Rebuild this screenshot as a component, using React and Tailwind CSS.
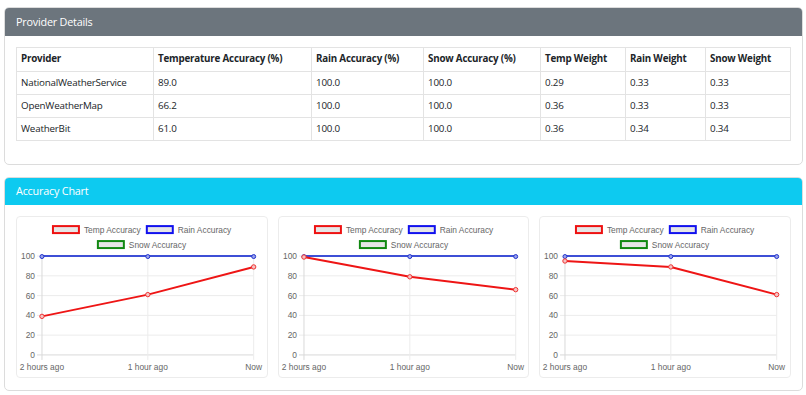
import React from 'react';

const providers = [
  { name: 'NationalWeatherService', temp: '89.0', rain: '100.0', snow: '100.0', tw: '0.29', rw: '0.33', sw: '0.33' },
  { name: 'OpenWeatherMap', temp: '66.2', rain: '100.0', snow: '100.0', tw: '0.36', rw: '0.33', sw: '0.33' },
  { name: 'WeatherBit', temp: '61.0', rain: '100.0', snow: '100.0', tw: '0.36', rw: '0.34', sw: '0.34' },
];

const charts = [
  { temp: [39, 61, 89] },
  { temp: [99, 79, 66] },
  { temp: [95, 89, 61] },
];

const xs = [26, 132, 238];
const yOf = (v) => 139 - v * 0.99;

const AccuracyChart = ({ temp }) => {
  const tempPts = temp.map((v, i) => `${xs[i]},${yOf(v)}`).join(' ');
  const rainPts = xs.map((x) => `${x},${yOf(100)}`).join(' ');

  return (
    <svg viewBox="1 1 250 160" className="block w-full h-[160px]" style={{ fontFamily: '"Liberation Sans", Arial, sans-serif' }}>
      {/* legend */}
      <rect x="37" y="10" width="26" height="7" fill="#e6e6e6" stroke="#ee1111" strokeWidth="2" />
      <text x="68" y="16.5" fontSize="8.4" fill="#666">Temp Accuracy</text>
      <rect x="131" y="10" width="26" height="7" fill="#e6e6e6" stroke="#1111ee" strokeWidth="2" />
      <text x="162" y="16.5" fontSize="8.4" fill="#666">Rain Accuracy</text>
      <rect x="82" y="25" width="26" height="7" fill="#e6e6e6" stroke="#118811" strokeWidth="2" />
      <text x="113" y="31.5" fontSize="8.4" fill="#666">Snow Accuracy</text>

      {/* grid */}
      {[0, 20, 40, 60, 80, 100].map((v) => (
        <g key={v}>
          <line x1="21" x2="238" y1={yOf(v)} y2={yOf(v)} stroke={v === 0 ? '#d9d9d9' : '#ececec'} strokeWidth="1" />
          <text x="19" y={yOf(v) + 3} fontSize="8.4" fill="#666" textAnchor="end">{v}</text>
        </g>
      ))}
      {xs.map((x, i) => (
        <line key={x} x1={x} x2={x} y1={yOf(100)} y2="144" stroke={i === 0 ? '#d9d9d9' : '#ececec'} strokeWidth="1" />
      ))}
      {['2 hours ago', '1 hour ago', 'Now'].map((l, i) => (
        <text key={l} x={xs[i]} y="154" fontSize="8.4" fill="#666" textAnchor="middle">{l}</text>
      ))}

      {/* data */}
      <polyline points={rainPts} fill="none" stroke="#3d4fd6" strokeWidth="2" />
      {xs.map((x) => (
        <circle key={x} cx={x} cy={yOf(100) + 0.5} r="2" fill="#9aa3ea" stroke="#2233cc" strokeWidth="1" />
      ))}
      <polyline points={tempPts} fill="none" stroke="#ee1515" strokeWidth="2" strokeLinejoin="round" />
      {temp.map((v, i) => (
        <circle key={i} cx={xs[i]} cy={yOf(v)} r="2.2" fill="#f4c4c4" stroke="#ee3333" strokeWidth="1" />
      ))}
    </svg>
  );
};

const App = () => {
  return (
    <div className="min-h-[395px] bg-white pl-[4px] pr-[3px] pt-[7px] text-[#212529]" style={{ fontFamily: '"Open Sans", "Noto Sans", sans-serif' }}>
      {/* Provider details */}
      <div className="border border-[#dcdcdc] rounded-[5px] overflow-hidden">
        <div className="h-[28px] bg-[#6c757d] text-white text-[10.8px] tracking-[-0.2px] flex items-center pl-[11px]">
          Provider Details
        </div>
        <div className="px-[11px] pt-[11px] pb-[23px]">
          <table className="w-full table-fixed border-collapse text-[9.8px] tracking-[-0.2px]">
            <colgroup>
              <col className="w-[137px]" />
              <col className="w-[158px]" />
              <col className="w-[112px]" />
              <col className="w-[117px]" />
              <col className="w-[85px]" />
              <col className="w-[80px]" />
              <col />
            </colgroup>
            <thead>
              <tr className="h-[24px]">
                {['Provider', 'Temperature Accuracy (%)', 'Rain Accuracy (%)', 'Snow Accuracy (%)', 'Temp Weight', 'Rain Weight', 'Snow Weight'].map((h) => (
                  <th key={h} className="border border-[#e3e3e3] px-[4px] py-0 text-left font-bold whitespace-nowrap">{h}</th>
                ))}
              </tr>
            </thead>
            <tbody>
              {providers.map((p) => (
                <tr key={p.name} className="h-[23px]">
                  {[p.name, p.temp, p.rain, p.snow, p.tw, p.rw, p.sw].map((c, i) => (
                    <td key={i} className="border border-[#e3e3e3] px-[4px] py-0 whitespace-nowrap">{c}</td>
                  ))}
                </tr>
              ))}
            </tbody>
          </table>
        </div>
      </div>

      {/* Accuracy chart */}
      <div className="mt-[12px] border border-[#dcdcdc] rounded-[5px] overflow-hidden">
        <div className="h-[27px] bg-[#0dcaf0] text-white text-[10.8px] tracking-[-0.2px] flex items-center pl-[11px]">
          Accuracy Chart
        </div>
        <div className="p-[11px] pb-[12px] grid grid-cols-3 gap-[10px]">
          {charts.map((c, i) => (
            <div key={i} className="border border-[#ececec] rounded-[4px]">
              <AccuracyChart temp={c.temp} />
            </div>
          ))}
        </div>
      </div>
    </div>
  );
};

export default App;
